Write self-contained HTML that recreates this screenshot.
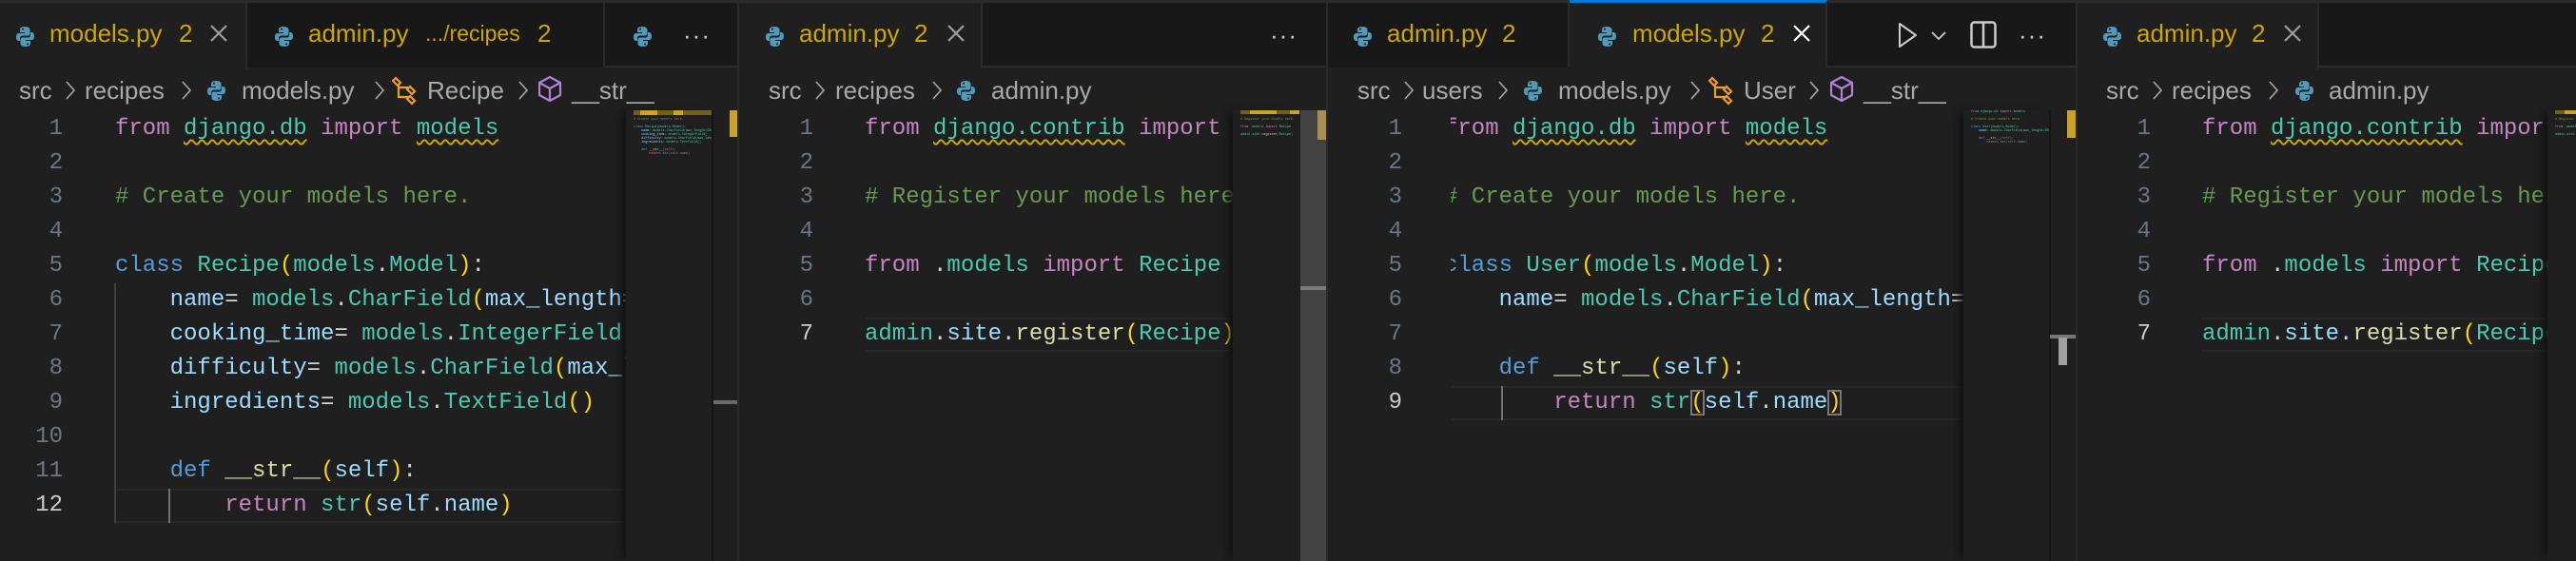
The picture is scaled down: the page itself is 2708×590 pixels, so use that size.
<!DOCTYPE html>
<html><head><meta charset="utf-8">
<style>
*{margin:0;padding:0;box-sizing:border-box}
body{width:2708px;height:590px;background:#1f1f1f;position:relative;overflow:hidden;font-family:"Liberation Sans",sans-serif}
.a{position:absolute}
.tabbar{position:absolute;top:0;height:71px;background:#181818;border-top:3px solid #2b2b2b;border-bottom:2px solid #2b2b2b}
.tab{position:absolute;top:3px;height:68px;background:#181818;border-right:2px solid #2b2b2b}
.tab.act{background:#1f1f1f;height:70px}
.tt{position:absolute;top:17px;font-size:26px;color:#cca700;white-space:nowrap}
.x{position:absolute;top:22px;width:20px;height:20px}
.bc{position:absolute;top:80px;font-size:26px;color:#a9a9a9;white-space:nowrap}
.sep{position:absolute;top:84px;width:12px;height:22px}
.code{position:absolute;top:118px;height:472px;overflow:hidden}
.ln{position:absolute;font-family:"Liberation Mono",monospace;font-size:24px;line-height:36px;color:#6e7681;text-align:right;width:60px}
.cl{position:absolute;left:0;font-family:"Liberation Mono",monospace;font-size:24px;line-height:36px;height:36px;color:#d4d4d4;white-space:pre}
.k{color:#c586c0}.m{color:#4ec9b0}.c{color:#569cd6}.cm{color:#6a9955}.v{color:#9cdcfe}.f{color:#dcdcaa}.p{color:#ffd700}
.sq{text-decoration:underline wavy #cca700;text-decoration-thickness:2px;text-underline-offset:5px}
.mm{position:absolute;top:116px;height:474px;background:#1f1f1f;box-shadow:-8px 0 8px -4px #111 }
.mt{position:absolute;font-family:"Liberation Mono",monospace;font-size:3.4px;line-height:4px;white-space:pre;color:#888}
.sb{position:absolute;top:116px;height:474px;border-left:2px solid #141414}
.ig{position:absolute;width:2px;background:#404040}
</style></head><body>

<svg width="0" height="0" style="position:absolute">
<defs>
<g id="py"><path d="M9 1c-4 0-5 1.5-5 3.5V7h5v1H2.5C.8 8 0 9.5 0 12s1 4 2.5 4H4v-2.5C4 11.5 5 10.5 7 10.5h5c1.5 0 2.5-1 2.5-2.5V4.5C14.5 2.5 13 1 9 1z" fill="#519aba"/><path d="M10 22c4 0 5-1.5 5-3.5V16h-5v-1h6.5c1.7 0 2.5-1.5 2.5-4s-1-4-2.5-4H15v2.5c0 2-1 3-3 3H7c-1.5 0-2.5 1-2.5 2.5v3.5C4.5 20.5 6 22 10 22z" fill="#519aba"/><circle cx="7" cy="3.6" r="1" fill="#181818"/><circle cx="12" cy="19.4" r="1" fill="#181818"/></g>
<g id="xx"><path d="M2 2L18 18M18 2L2 18" stroke="currentColor" stroke-width="2.2"/></g>
<g id="ch"><path d="M2 2L10 11L2 20" stroke="#a9a9a9" stroke-width="1.6" fill="none"/></g>
<g id="cls"><path d="M4 2l5 5-3 3-5-5zM19 11l5 5-3 3-5-5zM19 21l5 5-3 3-5-5zM7 9v13h11M7 12h10" stroke="#ee9d28" stroke-width="2.2" fill="none"/></g>
<g id="cube"><path d="M12 1L23 7v13l-11 6L1 20V7zM1 7l11 6 11-6M12 13v13" stroke="#b180d7" stroke-width="2.2" fill="none" stroke-linejoin="round"/></g>
</defs></svg>

<!-- ============ PANE 1 ============ -->
<div class="tabbar" style="left:0;width:776px"></div>
<div class="tab act" style="left:0;width:260px">
  <svg class="a" style="left:17px;top:24px" width="20" height="23"><use href="#py"/></svg>
  <span class="tt" style="left:52px">models.py</span><span class="tt" style="left:188px">2</span>
  <svg class="x" style="left:220px;color:#9d9d9d"><use href="#xx"/></svg>
</div>
<div class="tab" style="left:260px;width:376px">
  <svg class="a" style="left:29px;top:24px" width="20" height="23"><use href="#py"/></svg>
  <span class="tt" style="left:64px">admin.py</span><span class="tt" style="left:187px;font-size:23px;top:19px">.../recipes</span><span class="tt" style="left:305px">2</span>
</div>
<svg class="a" style="left:666px;top:27px" width="20" height="23"><use href="#py"/></svg>
<div class="a" style="left:718px;top:22px;color:#ccc;font-size:26px;letter-spacing:1px">···</div>

<span class="bc" style="left:20px">src</span><svg class="sep" style="left:68px"><use href="#ch"/></svg>
<span class="bc" style="left:89px">recipes</span><svg class="sep" style="left:190px"><use href="#ch"/></svg>
<svg class="a" style="left:218px;top:84px" width="20" height="23"><use href="#py"/></svg>
<span class="bc" style="left:254px">models.py</span><svg class="sep" style="left:393px"><use href="#ch"/></svg>
<svg class="a" style="left:412px;top:80px" width="28" height="32"><use href="#cls"/></svg>
<span class="bc" style="left:449px">Recipe</span><svg class="sep" style="left:544px"><use href="#ch"/></svg>
<svg class="a" style="left:566px;top:80px" width="26" height="30"><use href="#cube"/></svg>
<span class="bc" style="left:601px">__str__</span>

<div class="ln" style="left:6px;top:118px">1<br>2<br>3<br>4<br>5<br>6<br>7<br>8<br>9<br>10<br>11<br><span style="color:#ccc">12</span></div>
<div class="a" style="left:121px;top:514px;width:537px;height:36px;border-top:2px solid #282828;border-bottom:2px solid #282828"></div>
<div class="ig" style="left:120px;top:298px;height:252px"></div>
<div class="ig" style="left:177px;top:514px;height:36px;background:#707070"></div>
<div class="code" style="left:121px;width:537px">
<div class="cl" style="top:0"><span class="k">from</span> <span class="m sq">django.db</span> <span class="k">import</span> <span class="m sq">models</span></div>
<div class="cl cm" style="top:72px"># Create your models here.</div>
<div class="cl" style="top:144px"><span class="c">class</span> <span class="m">Recipe</span><span class="p">(</span><span class="m">models</span>.<span class="m">Model</span><span class="p">)</span>:</div>
<div class="cl" style="top:180px">    <span class="v">name</span>= <span class="m">models</span>.<span class="m">CharField</span><span class="p">(</span><span class="v">max_length</span>=200<span class="p">)</span></div>
<div class="cl" style="top:216px">    <span class="v">cooking_time</span>= <span class="m">models</span>.<span class="m">IntegerField</span><span class="p">()</span></div>
<div class="cl" style="top:252px">    <span class="v">difficulty</span>= <span class="m">models</span>.<span class="m">CharField</span><span class="p">(</span><span class="v">max_length</span>=20<span class="p">)</span></div>
<div class="cl" style="top:288px">    <span class="v">ingredients</span>= <span class="m">models</span>.<span class="m">TextField</span><span class="p">()</span></div>
<div class="cl" style="top:360px">    <span class="c">def</span> <span class="f">__str__</span><span class="p">(</span><span class="v">self</span><span class="p">)</span>:</div>
<div class="cl" style="top:396px">        <span class="k">return</span> <span class="m">str</span><span class="p">(</span><span class="v">self</span>.<span class="v">name</span><span class="p">)</span></div>
</div>
<div class="mm" style="left:658px;width:90px">
 <div class="a" style="left:8px;top:0;width:82px;height:5px;background:#6f5f22"></div>
 <div class="a" style="left:15px;top:0;width:18px;height:5px;background:#c9a227"></div>
 <div class="a" style="left:50px;top:0;width:10px;height:5px;background:#c9a227"></div>
 <div class="mt" style="left:8px;top:8px"><span class="cm"># Create your models here.</span>

<span class="c">class</span> <span class="m">Recipe(models.Model):</span>
    <span class="v">name</span>= <span class="m">models.CharField(max_length=200</span>
    <span class="v">cooking_time</span>= <span class="m">models.IntegerField(</span>
    <span class="v">difficulty</span>= <span class="m">models.CharField(max_leng</span>
    <span class="v">ingredients</span>= <span class="m">models.TextField()</span>

    <span class="c">def</span> <span class="f">__str__</span>(self):
        <span class="k">return</span> <span class="m">str</span>(self.name)</div>
</div>
<div class="sb" style="left:748px;width:28px"></div>
<div class="a" style="left:767px;top:116px;width:9px;height:28px;background:#c9a227"></div>
<div class="a" style="left:750px;top:421px;width:26px;height:4px;background:#6b6b6b"></div>
<div class="a" style="left:775px;top:0;width:2px;height:590px;background:#2b2b2b"></div>

<!-- ============ PANE 2 ============ -->
<div class="tabbar" style="left:777px;width:618px"></div>
<div class="tab act" style="left:777px;width:256px">
  <svg class="a" style="left:28px;top:24px" width="20" height="23"><use href="#py"/></svg>
  <span class="tt" style="left:63px">admin.py</span><span class="tt" style="left:184px">2</span>
  <svg class="x" style="left:218px;color:#9d9d9d"><use href="#xx"/></svg>
</div>
<div class="a" style="left:1335px;top:22px;color:#ccc;font-size:26px;letter-spacing:1px">···</div>

<span class="bc" style="left:808px">src</span><svg class="sep" style="left:856px"><use href="#ch"/></svg>
<span class="bc" style="left:878px">recipes</span><svg class="sep" style="left:979px"><use href="#ch"/></svg>
<svg class="a" style="left:1006px;top:84px" width="20" height="23"><use href="#py"/></svg>
<span class="bc" style="left:1042px">admin.py</span>

<div class="ln" style="left:795px;top:118px">1<br>2<br>3<br>4<br>5<br>6<br><span style="color:#ccc">7</span></div>
<div class="a" style="left:909px;top:334px;width:387px;height:36px;border-top:2px solid #282828;border-bottom:2px solid #282828"></div>
<div class="code" style="left:909px;width:387px">
<div class="cl" style="top:0"><span class="k">from</span> <span class="m sq">django.contrib</span> <span class="k">import</span> <span class="v">admin</span></div>
<div class="cl cm" style="top:72px"># Register your models here.</div>
<div class="cl" style="top:144px"><span class="k">from</span> .<span class="m">models</span> <span class="k">import</span> <span class="m">Recipe</span></div>
<div class="cl" style="top:216px"><span class="m">admin</span>.<span class="v">site</span>.<span class="f">register</span><span class="p">(</span><span class="m">Recipe</span><span class="p">)</span></div>
</div>
<div class="mm" style="left:1296px;width:70px">
 <div class="a" style="left:8px;top:0;width:62px;height:4px;background:#6f5f22"></div>
 <div class="a" style="left:18px;top:0;width:28px;height:4px;background:#c9a227"></div>
 <div class="a" style="left:60px;top:0;width:10px;height:4px;background:#c9a227"></div>
 <div class="mt" style="left:8px;top:8px"><span class="cm"># Register your models here.</span>

<span class="k">from</span> <span class="m">.models</span> <span class="k">import</span> <span class="m">Recipe</span>

<span class="m">admin.site.</span><span class="f">register</span>(<span class="m">Recipe</span>)</div>
</div>
<div class="a" style="left:1367px;top:116px;width:27px;height:474px;background:#434343"></div>
<div class="a" style="left:1385px;top:116px;width:9px;height:31px;background:#a89052"></div>
<div class="a" style="left:1367px;top:301px;width:27px;height:4px;background:#7a7a7a"></div>
<div class="a" style="left:1394px;top:0;width:2px;height:590px;background:#2b2b2b"></div>

<!-- ============ PANE 3 ============ -->
<div class="tabbar" style="left:1396px;width:787px"></div>
<div class="tab" style="left:1396px;width:254px">
  <svg class="a" style="left:27px;top:24px" width="20" height="23"><use href="#py"/></svg>
  <span class="tt" style="left:62px">admin.py</span><span class="tt" style="left:183px">2</span>
</div>
<div class="tab act" style="left:1650px;width:271px;border-top:3px solid #0078d4;top:0;height:71px">
  <svg class="a" style="left:30px;top:24px" width="20" height="23"><use href="#py"/></svg>
  <span class="tt" style="left:66px;top:17px">models.py</span><span class="tt" style="left:201px;top:17px">2</span>
  <svg class="x" style="left:234px;top:22px;color:#fff"><use href="#xx"/></svg>
</div>
<svg class="a" style="left:1994px;top:23px" width="24" height="28"><path d="M3 2L20 14L3 26Z" stroke="#ccc" stroke-width="2" fill="none" stroke-linejoin="round"/></svg>
<svg class="a" style="left:2030px;top:32px" width="16" height="12"><path d="M1 2L8 9L15 2" stroke="#ccc" stroke-width="1.8" fill="none"/></svg>
<svg class="a" style="left:2071px;top:22px" width="28" height="29"><rect x="1.5" y="1.5" width="25" height="26" rx="3" stroke="#ccc" stroke-width="2.5" fill="none"/><path d="M14 2v25" stroke="#ccc" stroke-width="2.5"/></svg>
<div class="a" style="left:2122px;top:22px;color:#ccc;font-size:26px;letter-spacing:1px">···</div>

<span class="bc" style="left:1427px">src</span><svg class="sep" style="left:1475px"><use href="#ch"/></svg>
<span class="bc" style="left:1495px">users</span><svg class="sep" style="left:1574px"><use href="#ch"/></svg>
<svg class="a" style="left:1602px;top:84px" width="20" height="23"><use href="#py"/></svg>
<span class="bc" style="left:1638px">models.py</span><svg class="sep" style="left:1776px"><use href="#ch"/></svg>
<svg class="a" style="left:1796px;top:80px" width="28" height="32"><use href="#cls"/></svg>
<span class="bc" style="left:1833px">User</span><svg class="sep" style="left:1901px"><use href="#ch"/></svg>
<svg class="a" style="left:1924px;top:80px" width="26" height="30"><use href="#cube"/></svg>
<span class="bc" style="left:1959px">__str__</span>

<div class="ln" style="left:1414px;top:118px">1<br>2<br>3<br>4<br>5<br>6<br>7<br>8<br><span style="color:#ccc">9</span></div>
<div class="a" style="left:1525px;top:406px;width:539px;height:36px;border-top:2px solid #282828;border-bottom:2px solid #282828"></div>
<div class="ig" style="left:1578px;top:406px;height:36px;background:#707070"></div>
<div class="code" style="left:1525px;width:539px">
<div style="position:absolute;left:-7px;top:0;width:600px;height:475px">
<div class="cl" style="top:0"><span class="k">from</span> <span class="m sq">django.db</span> <span class="k">import</span> <span class="m sq">models</span></div>
<div class="cl cm" style="top:72px"># Create your models here.</div>
<div class="cl" style="top:144px"><span class="c">class</span> <span class="m">User</span><span class="p">(</span><span class="m">models</span>.<span class="m">Model</span><span class="p">)</span>:</div>
<div class="cl" style="top:180px">    <span class="v">name</span>= <span class="m">models</span>.<span class="m">CharField</span><span class="p">(</span><span class="v">max_length</span>=200<span class="p">)</span></div>
<div class="cl" style="top:252px">    <span class="c">def</span> <span class="f">__str__</span><span class="p">(</span><span class="v">self</span><span class="p">)</span>:</div>
<div class="cl" style="top:288px">        <span class="k">return</span> <span class="m">str</span><span class="p" style="outline:2px solid #777;outline-offset:-2px">(</span><span class="v">self</span>.<span class="v">name</span><span class="p" style="outline:2px solid #777;outline-offset:-2px">)</span></div>
</div></div>
<div class="mm" style="left:2064px;width:90px">
 <div class="mt" style="left:8px;top:0"><span class="k">from</span> <span class="m">django.db</span> <span class="k">import</span> <span class="m">models</span>

<span class="cm"># Create your models here.</span>

<span class="c">class</span> <span class="m">User(models.Model):</span>
    <span class="v">name</span>= <span class="m">models.CharField(max_length=200</span>

    <span class="c">def</span> <span class="f">__str__</span>(self):
        <span class="k">return</span> <span class="m">str</span>(self.name)</div>
</div>
<div class="sb" style="left:2154px;width:28px"></div>
<div class="a" style="left:2173px;top:116px;width:9px;height:29px;background:#c9a227"></div>
<div class="a" style="left:2155px;top:352px;width:27px;height:4px;background:#777"></div>
<div class="a" style="left:2164px;top:355px;width:9px;height:29px;background:#a0a0a0"></div>
<div class="a" style="left:2182px;top:0;width:2px;height:590px;background:#2b2b2b"></div>

<!-- ============ PANE 4 ============ -->
<div class="tabbar" style="left:2184px;width:524px"></div>
<div class="tab act" style="left:2184px;width:254px">
  <svg class="a" style="left:27px;top:24px" width="20" height="23"><use href="#py"/></svg>
  <span class="tt" style="left:62px">admin.py</span><span class="tt" style="left:183px">2</span>
  <svg class="x" style="left:216px;color:#9d9d9d"><use href="#xx"/></svg>
</div>

<span class="bc" style="left:2214px">src</span><svg class="sep" style="left:2262px"><use href="#ch"/></svg>
<span class="bc" style="left:2283px">recipes</span><svg class="sep" style="left:2384px"><use href="#ch"/></svg>
<svg class="a" style="left:2413px;top:84px" width="20" height="23"><use href="#py"/></svg>
<span class="bc" style="left:2448px">admin.py</span>

<div class="ln" style="left:2201px;top:118px">1<br>2<br>3<br>4<br>5<br>6<br><span style="color:#ccc">7</span></div>
<div class="a" style="left:2315px;top:334px;width:363px;height:36px;border-top:2px solid #282828;border-bottom:2px solid #282828"></div>
<div class="code" style="left:2315px;width:363px">
<div class="cl" style="top:0"><span class="k">from</span> <span class="m sq">django.contrib</span> <span class="k">import</span> <span class="v">admin</span></div>
<div class="cl cm" style="top:72px"># Register your models here.</div>
<div class="cl" style="top:144px"><span class="k">from</span> .<span class="m">models</span> <span class="k">import</span> <span class="m">Recipe</span></div>
<div class="cl" style="top:216px"><span class="m">admin</span>.<span class="v">site</span>.<span class="f">register</span><span class="p">(</span><span class="m">Recipe</span><span class="p">)</span></div>
</div>
<div class="mm" style="left:2678px;width:30px">
 <div class="a" style="left:8px;top:0;width:22px;height:4px;background:#6f5f22"></div>
 <div class="a" style="left:18px;top:0;width:12px;height:4px;background:#c9a227"></div>
 <div class="mt" style="left:8px;top:8px"><span class="cm"># Register your models here.</span>

<span class="k">from</span> <span class="m">.models</span> <span class="k">import</span> <span class="m">Recipe</span>

<span class="m">admin.site.</span><span class="f">register</span>(<span class="m">Recipe</span>)</div>
</div>

</body></html>
